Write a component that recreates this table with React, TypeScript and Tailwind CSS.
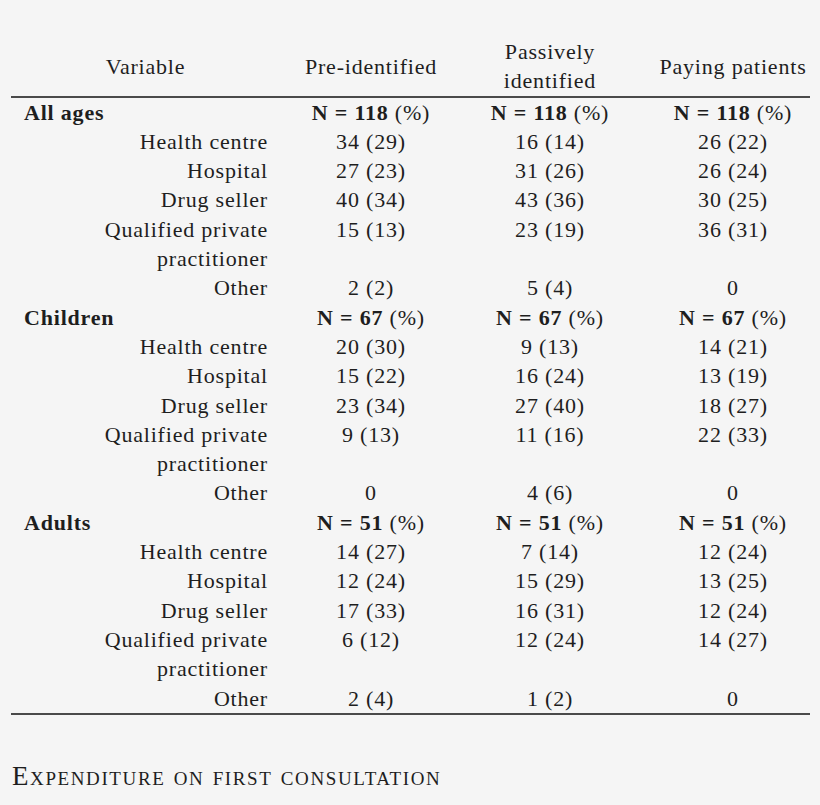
import React from "react";

type Row = { label: string[]; values: string[] };
type Group = { name: string; n: string; rows: Row[] };

const groups: Group[] = [
  {
    name: "All ages",
    n: "118",
    rows: [
      { label: ["Health centre"], values: ["34 (29)", "16 (14)", "26 (22)"] },
      { label: ["Hospital"], values: ["27 (23)", "31 (26)", "26 (24)"] },
      { label: ["Drug seller"], values: ["40 (34)", "43 (36)", "30 (25)"] },
      { label: ["Qualified private", "practitioner"], values: ["15 (13)", "23 (19)", "36 (31)"] },
      { label: ["Other"], values: ["2 (2)", "5 (4)", "0"] },
    ],
  },
  {
    name: "Children",
    n: "67",
    rows: [
      { label: ["Health centre"], values: ["20 (30)", "9 (13)", "14 (21)"] },
      { label: ["Hospital"], values: ["15 (22)", "16 (24)", "13 (19)"] },
      { label: ["Drug seller"], values: ["23 (34)", "27 (40)", "18 (27)"] },
      { label: ["Qualified private", "practitioner"], values: ["9 (13)", "11 (16)", "22 (33)"] },
      { label: ["Other"], values: ["0", "4 (6)", "0"] },
    ],
  },
  {
    name: "Adults",
    n: "51",
    rows: [
      { label: ["Health centre"], values: ["14 (27)", "7 (14)", "12 (24)"] },
      { label: ["Hospital"], values: ["12 (24)", "15 (29)", "13 (25)"] },
      { label: ["Drug seller"], values: ["17 (33)", "16 (31)", "12 (24)"] },
      { label: ["Qualified private", "practitioner"], values: ["6 (12)", "12 (24)", "14 (27)"] },
      { label: ["Other"], values: ["2 (4)", "1 (2)", "0"] },
    ],
  },
];

const cols = "grid grid-cols-[269px_182px_176px_172px]";

function NCell({ n, last }: { n: string; last?: boolean }) {
  return (
    <div className={`text-center ${last ? "pl-[18px]" : ""}`}>
      <span className="font-bold">N = {n}</span> (%)
    </div>
  );
}

export default function App() {
  return (
    <div className="min-h-screen w-[820px] bg-[#f5f5f5] text-[#1e1e1e] pt-[37px] px-[11px] font-['Liberation_Serif','DejaVu_Serif',serif]">
      <div className="w-[799px] text-[22px] leading-[29.3px] tracking-[0.8px]">
        <div className={`${cols} items-center border-b-[2px] border-[#4a4a4a]`}>
          <div className="text-center">Variable</div>
          <div className="text-center">Pre-identified</div>
          <div className="text-center">
            Passively
            <br />
            identified
          </div>
          <div className="text-center pl-[18px]">Paying patients</div>
        </div>

        <div className="border-b-[2px] border-[#4a4a4a]">
          {groups.map((g) => (
            <div key={g.name}>
              <div className={cols}>
                <div className="pl-[13px] font-bold">{g.name}</div>
                <NCell n={g.n} />
                <NCell n={g.n} />
                <NCell n={g.n} last />
              </div>
              {g.rows.map((r, i) => (
                <div key={i} className={cols}>
                  <div className="text-right pr-[12px]">
                    {r.label.map((l, j) => (
                      <div key={j}>{l}</div>
                    ))}
                  </div>
                  <div className="text-center">{r.values[0]}</div>
                  <div className="text-center">{r.values[1]}</div>
                  <div className="text-center pl-[18px]">{r.values[2]}</div>
                </div>
              ))}
            </div>
          ))}
        </div>
      </div>

      <p className="mt-[46px] pl-[1px] text-[27px] leading-[30px] tracking-[1.6px] [font-variant-caps:small-caps]">
        Expenditure on first consultation
      </p>
    </div>
  );
}
